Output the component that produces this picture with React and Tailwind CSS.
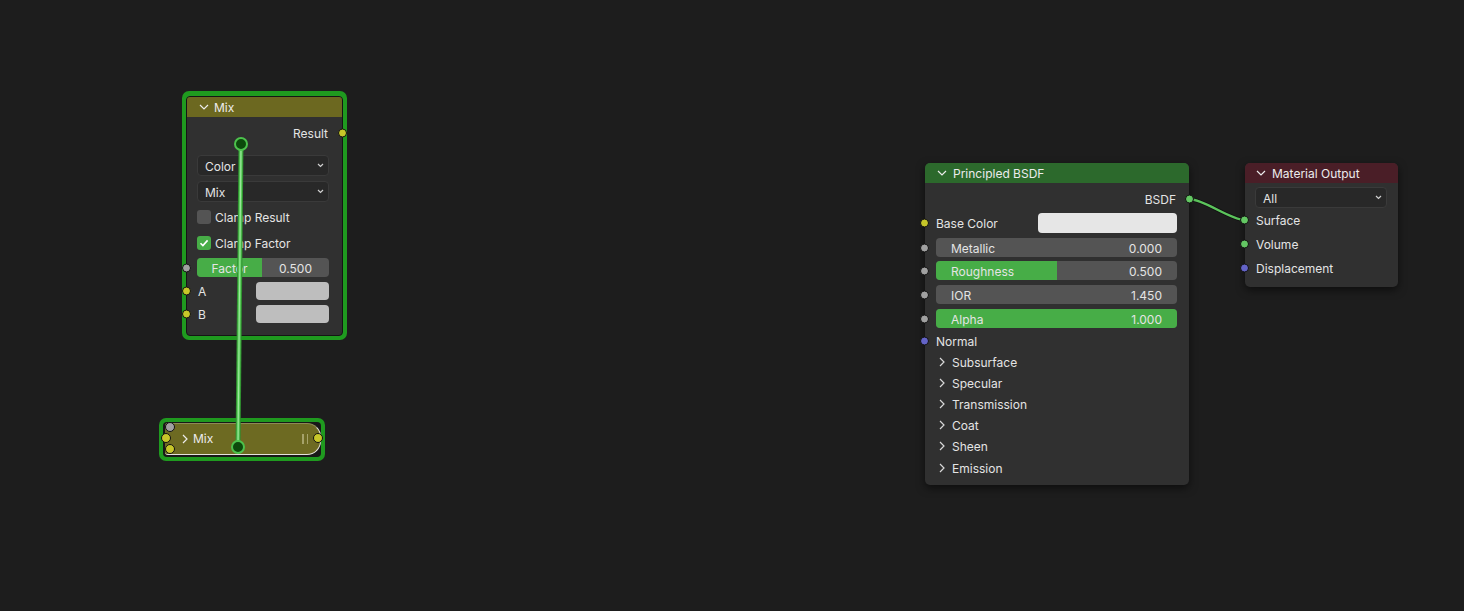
import React from 'react';

const SOCK = {
  yellow: 'bg-[#c7c729]',
  gray: 'bg-[#a1a1a1]',
  green: 'bg-[#63c763]',
  blue: 'bg-[#6363c7]',
};

// nudges glyphs down a pixel so caps sit centred like Blender's text
const T = ({ children, className = '' }) => <span className={`pt-[2px] ${className}`}>{children}</span>;

const Socket = ({ color, className = '' }) => (
  <span
    className={`absolute top-1/2 -translate-y-1/2 w-[9px] h-[9px] rounded-full border border-[#111] ${SOCK[color]} ${className}`}
  />
);

const ChevronDown = ({ className = '' }) => (
  <svg width="10" height="6" viewBox="0 0 10 6" className={className}>
    <path d="M1 1l4 4 4-4" fill="none" stroke="currentColor" strokeWidth="1.2" />
  </svg>
);

const ChevronRight = ({ className = '' }) => (
  <svg width="6" height="10" viewBox="0 0 6 10" className={className}>
    <path d="M1 1l4 4-4 4" fill="none" stroke="currentColor" strokeWidth="1.2" />
  </svg>
);

const SmallChevron = () => (
  <svg width="7" height="5" viewBox="0 0 7 5" className="text-[#d0d0d0]">
    <path d="M1 1l2.5 2.5L6 1" fill="none" stroke="currentColor" strokeWidth="1.2" />
  </svg>
);

const Dropdown = ({ label, className = '' }) => (
  <div
    className={`flex items-center justify-between h-[21px] w-[132px] rounded-[4px] bg-[#282828] border border-[#3a3a3a] pl-[7px] pr-[4px] ${className}`}
  >
    <T>{label}</T>
    <SmallChevron />
  </div>
);

const Checkbox = ({ checked, label, className = '' }) => (
  <div className={`flex items-center gap-[4px] h-[14px] ml-[10px] ${className}`}>
    <span
      className={`flex items-center justify-center w-[14px] h-[14px] rounded-[3px] ${
        checked ? 'bg-[#47ad47]' : 'bg-[#545454]'
      }`}
    >
      {checked && (
        <svg width="10" height="10" viewBox="0 0 10 10">
          <path d="M1.5 5.2l2.4 2.4L8.6 2.4" fill="none" stroke="#fff" strokeWidth="1.6" />
        </svg>
      )}
    </span>
    <T>{label}</T>
  </div>
);

const Slider = ({ label, value, fill }) => (
  <div className="relative flex items-center justify-between h-[19px] w-[241px] ml-[11px] rounded-[4px] bg-[#545454] overflow-hidden px-[15px]">
    {fill > 0 && (
      <div className="absolute left-0 top-0 bottom-0 bg-[#47ad47]" style={{ width: `${fill * 100}%` }} />
    )}
    <T className="relative">{label}</T>
    <T className="relative">{value}</T>
  </div>
);

const MixNode = () => (
  <div className="absolute left-[182px] top-[91px] w-[165px] rounded-[7px] bg-[#1f9a1f] px-[4px] pt-[5px] pb-[4px]">
    <div className="relative rounded-[4px] border border-[#151515] bg-[#303030]">
      <div className="flex items-center h-[20px] pl-[12px] gap-[5px] rounded-t-[3px] bg-[#6c6820] text-[#ececec]">
        <ChevronDown />
        <T>Mix</T>
      </div>
      <div className="pt-[6px] pb-[12px]">
        <div className="relative flex items-center justify-end h-[20px] pr-[14px]">
          <T>Result</T>
          <Socket color="yellow" className="right-[-5px]" />
        </div>
        <Dropdown label="Color" className="mt-[12px] ml-[10px]" />
        <Dropdown label="Mix" className="mt-[5px] ml-[10px]" />
        <Checkbox label="Clamp Result" className="mt-[8px]" />
        <Checkbox checked label="Clamp Factor" className="mt-[12px]" />
        <div className="relative mt-[8px] h-[19px]">
          <div className="flex h-[19px] w-[132px] ml-[10px] rounded-[4px] bg-[#545454] overflow-hidden">
            <div className="flex items-center justify-center w-[65px] bg-[#47ad47]">
              <T>Factor</T>
            </div>
            <div className="flex items-center justify-center flex-1">
              <T>0.500</T>
            </div>
          </div>
          <Socket color="gray" className="left-[-5px]" />
        </div>
        <div className="relative flex items-center mt-[5px] h-[18px] pl-[11px]">
          <T className="flex-1">A</T>
          <span className="w-[73px] h-[18px] mr-[13px] rounded-[4px] bg-[#bebebe]" />
          <Socket color="yellow" className="left-[-5px]" />
        </div>
        <div className="relative flex items-center mt-[5px] h-[18px] pl-[11px]">
          <T className="flex-1">B</T>
          <span className="w-[73px] h-[18px] mr-[13px] rounded-[4px] bg-[#bebebe]" />
          <Socket color="yellow" className="left-[-5px]" />
        </div>
      </div>
    </div>
  </div>
);

const CollapsedMix = () => (
  <div className="absolute left-[159px] top-[418px] w-[166px] h-[43px] rounded-[7px] bg-[#1f9a1f] p-[4px]">
    <div className="h-full rounded-[4px] bg-[#181818] pl-[2px] pt-[1px] pb-[2px]">
      <div className="flex items-center h-full pl-[17px] pr-[12px] gap-[5px] rounded-l-[3px] rounded-r-[14px] bg-[#6d6a22] border-t border-r border-b-[1.5px] border-[#e4e4dc] border-t-[#8d8a55] text-[#ececec]">
        <ChevronRight />
        <span className="flex-1">Mix</span>
        <span className="flex gap-[3px]">
          <span className="w-[1.5px] h-[10px] bg-[#a6a36a]" />
          <span className="w-[1.5px] h-[10px] bg-[#a6a36a]" />
        </span>
      </div>
    </div>
    <span className="absolute left-[6px] top-[4px] w-[10px] h-[10px] rounded-full border border-[#111] bg-[#a1a1a1]" />
    <span className="absolute left-[2px] top-[15px] w-[10px] h-[10px] rounded-full border border-[#111] bg-[#c7c729]" />
    <span className="absolute left-[6px] top-[26px] w-[10px] h-[10px] rounded-full border border-[#111] bg-[#c7c729]" />
    <span className="absolute left-[154px] top-[15px] w-[10px] h-[10px] rounded-full border border-[#111] bg-[#c7c729]" />
  </div>
);

const panels = ['Subsurface', 'Specular', 'Transmission', 'Coat', 'Sheen', 'Emission'];

const PrincipledNode = () => (
  <div className="absolute left-[925px] top-[163px] w-[264px] rounded-[5px] bg-[#303030] shadow-[0_3px_8px_rgba(0,0,0,0.55)]">
    <div className="flex items-center h-[20px] pl-[12px] gap-[6px] rounded-t-[5px] bg-[#2c692c] text-[#ececec]">
      <ChevronDown />
      <T>Principled BSDF</T>
    </div>
    <div className="pt-[6px] pb-[7px]">
      <div className="relative flex items-center justify-end h-[20px] pr-[13px]">
        <T>BSDF</T>
        <Socket color="green" className="right-[-5px]" />
      </div>
      <div className="relative flex items-center mt-[4px] h-[20px] pl-[11px]">
        <T className="flex-1">Base Color</T>
        <span className="w-[139px] h-[20px] mr-[12px] rounded-[4px] bg-[#e6e6e6]" />
        <Socket color="yellow" className="left-[-5px]" />
      </div>
      <div className="relative mt-[5px]">
        <Slider label="Metallic" value="0.000" fill={0} />
        <Socket color="gray" className="left-[-5px]" />
      </div>
      <div className="relative mt-[4px]">
        <Slider label="Roughness" value="0.500" fill={0.5} />
        <Socket color="gray" className="left-[-5px]" />
      </div>
      <div className="relative mt-[5px]">
        <Slider label="IOR" value="1.450" fill={0} />
        <Socket color="gray" className="left-[-5px]" />
      </div>
      <div className="relative mt-[5px]">
        <Slider label="Alpha" value="1.000" fill={1} />
        <Socket color="gray" className="left-[-5px]" />
      </div>
      <div className="relative flex items-center mt-[3px] h-[20px] pl-[11px]">
        <T>Normal</T>
        <Socket color="blue" className="left-[-5px]" />
      </div>
      {panels.map((p) => (
        <div key={p} className="flex items-center h-[21.2px] pl-[14px] gap-[7px]">
          <ChevronRight className="text-[#d8d8d8]" />
          <T>{p}</T>
        </div>
      ))}
    </div>
  </div>
);

const OutputNode = () => (
  <div className="absolute left-[1245px] top-[163px] w-[153px] rounded-[5px] bg-[#303030] shadow-[0_3px_8px_rgba(0,0,0,0.55)]">
    <div className="flex items-center h-[20px] pl-[11px] gap-[6px] rounded-t-[5px] bg-[#4a1e27] text-[#ececec]">
      <ChevronDown />
      <T>Material Output</T>
    </div>
    <div className="pt-[4px] pb-[7px]">
      <Dropdown label="All" className="ml-[10px] h-[20px]" />
      {[
        ['Surface', 'green'],
        ['Volume', 'green'],
        ['Displacement', 'blue'],
      ].map(([l, c]) => (
        <div key={l} className="relative flex items-center h-[24px] pl-[11px]">
          <T>{l}</T>
          <Socket color={c} className="left-[-5px]" />
        </div>
      ))}
    </div>
  </div>
);

export default function App() {
  return (
    <div
      className="relative w-[1464px] h-[611px] overflow-hidden bg-[#1d1d1d] text-[12px] leading-none text-[#e4e4e4]"
      style={{ fontFamily: 'Inter, "Noto Sans", sans-serif' }}
    >
      <svg className="absolute inset-0 pointer-events-none" width="1464" height="611">
        <path d="M1189 199 C1204 199 1230 220 1245 220" fill="none" stroke="#111" strokeWidth="4" />
        <path d="M1189 199 C1204 199 1230 220 1245 220" fill="none" stroke="#5cc45c" strokeWidth="2.4" />
      </svg>

      <MixNode />
      <CollapsedMix />
      <PrincipledNode />
      <OutputNode />

      <svg className="absolute inset-0 pointer-events-none" width="1464" height="611">
        <line x1="241" y1="144" x2="238" y2="447" stroke="#2f8f2f" strokeWidth="5" />
        <line x1="241" y1="144" x2="238" y2="447" stroke="#5bcc5b" strokeWidth="3" />
        <line x1="241" y1="144" x2="238" y2="447" stroke="#a0e8a0" strokeWidth="1" />
        <circle cx="241" cy="144" r="6" fill="#0c4a0c" stroke="#4cc24c" strokeWidth="2" />
        <circle cx="238" cy="447" r="6" fill="#0c4a0c" stroke="#4cc24c" strokeWidth="2" />
      </svg>
    </div>
  );
}
